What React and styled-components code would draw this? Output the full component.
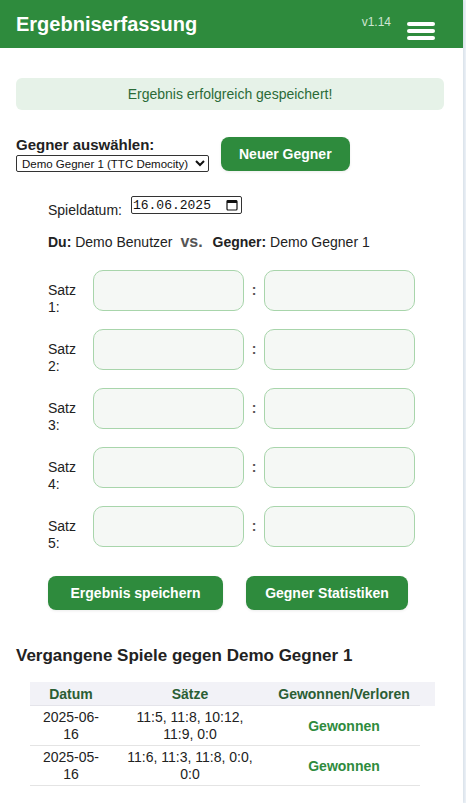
import React from "react";
import styled, { createGlobalStyle } from "styled-components";

const GlobalStyle = createGlobalStyle`
  html, body {
    margin: 0;
    padding: 0;
    background: #eef3f8;
    font-family: "Liberation Sans", Arial, sans-serif;
    color: #222;
  }
`;

const sets = [1, 2, 3, 4, 5];

const games = [
  { date: "2025-06-16", sets: "11:5, 11:8, 10:12, 11:9, 0:0", result: "Gewonnen" },
  { date: "2025-05-16", sets: "11:6, 11:3, 11:8, 0:0, 0:0", result: "Gewonnen" },
];

const App = () => {
  return (
    <>
      <GlobalStyle />
      <Page>
        <Header>
          <Title>Ergebniserfassung</Title>
          <HeaderRight>
            <Version>v1.14</Version>
            <Burger>
              <span />
              <span />
              <span />
            </Burger>
          </HeaderRight>
        </Header>
        <Content>
          <Success>Ergebnis erfolgreich gespeichert!</Success>

          <OpponentRow>
            <OpponentPick>
              <PickLabel>Gegner auswählen:</PickLabel>
              <Select defaultValue="1">
                <option value="1">Demo Gegner 1 (TTC Democity)</option>
              </Select>
            </OpponentPick>
            <GreenButton>Neuer Gegner</GreenButton>
          </OpponentRow>

          <Form>
            <DateRow>
              <span>Spieldatum:</span>
              <DateBox>
                16.06.2025
                <svg width="12" height="12" viewBox="0 0 12 12">
                  <rect x="1" y="1.5" width="10" height="9.5" rx="1" fill="none" stroke="#111" strokeWidth="1.2" />
                  <rect x="1" y="1.5" width="10" height="2.5" fill="#111" />
                </svg>
              </DateBox>
            </DateRow>

            <Players>
              <b>Du:</b> Demo Benutzer <Vs>vs.</Vs> <b>Gegner:</b> Demo Gegner 1
            </Players>

            <Sets>
              {sets.map((n) => (
                <SetRow key={n}>
                  <SetLabel>Satz {n}:</SetLabel>
                  <ScoreInput />
                  <Colon>:</Colon>
                  <ScoreInput />
                </SetRow>
              ))}
            </Sets>

            <Actions>
              <GreenButton $width="175px">Ergebnis speichern</GreenButton>
              <GreenButton $width="162px">Gegner Statistiken</GreenButton>
            </Actions>
          </Form>

          <HistoryTitle>Vergangene Spiele gegen Demo Gegner 1</HistoryTitle>
          <Table>
            <thead>
              <tr>
                <Th>Datum</Th>
                <Th>Sätze</Th>
                <Th>Gewonnen/Verloren</Th>
              </tr>
            </thead>
            <tbody>
              {games.map((g) => (
                <tr key={g.date}>
                  <Td $w="66px">{g.date}</Td>
                  <Td $w="140px">{g.sets}</Td>
                  <Td><Win>{g.result}</Win></Td>
                </tr>
              ))}
            </tbody>
          </Table>
        </Content>
      </Page>
    </>
  );
};

const Page = styled.div`
  width: 463px;
  min-height: 803px;
  background: #fff;
  box-shadow: 1px 0 3px rgba(60, 90, 130, 0.15);
`;

const Header = styled.header`
  height: 48px;
  background: #2e8b3d;
  display: flex;
  align-items: center;
  justify-content: space-between;
  padding: 0 28px 0 16px;
  box-sizing: border-box;
`;

const Title = styled.h1`
  margin: 0;
  color: #fff;
  font-size: 20px;
  font-weight: bold;
`;

const HeaderRight = styled.div`
  display: flex;
  align-items: center;
  gap: 16px;
`;

const Version = styled.span`
  color: #cfe6d2;
  font-size: 12px;
  margin-top: -4px;
`;

const Burger = styled.div`
  display: flex;
  flex-direction: column;
  gap: 3px;
  margin-top: 13px;
  span {
    display: block;
    width: 28px;
    height: 4px;
    border-radius: 2px;
    background: #fff;
  }
`;

const Content = styled.main`
  padding: 30px 16px 0;
`;

const Success = styled.div`
  background: #e6f2e8;
  color: #2b6b37;
  border-radius: 6px;
  font-size: 14px;
  text-align: center;
  height: 32px;
  line-height: 32px;
  margin-right: 3px;
`;

const OpponentRow = styled.div`
  display: flex;
  align-items: center;
  gap: 12px;
  margin-top: 26px;
`;

const OpponentPick = styled.div`
  display: flex;
  flex-direction: column;
  gap: 2px;
`;

const PickLabel = styled.label`
  font-size: 15px;
  font-weight: bold;
  color: #222;
`;

const Select = styled.select`
  font-family: "Liberation Sans", Arial, sans-serif;
  font-size: 11.5px;
  width: 193px;
  height: 17px;
  padding: 0 0 0 1px;
  border: 1px solid #333;
  border-radius: 2px;
  background: #fff;
  color: #111;
`;

const GreenButton = styled.button`
  background: #2e8b3d;
  color: #fff;
  border: none;
  border-radius: 8px;
  font-family: "Liberation Sans", Arial, sans-serif;
  font-size: 14px;
  font-weight: bold;
  height: 34px;
  width: ${(p) => p.$width || "auto"};
  padding: 0 18px;
  box-shadow: 0 1px 3px rgba(0, 0, 0, 0.08);
`;

const Form = styled.div`
  padding: 0 32px;
  margin-top: 24px;
  font-size: 14px;
`;

const DateRow = styled.div`
  display: flex;
  align-items: flex-start;
  gap: 9px;
  span {
    margin-top: 6px;
  }
`;

const DateBox = styled.div`
  width: 111px;
  height: 18px;
  box-sizing: border-box;
  border: 1px solid #333;
  border-radius: 2px;
  display: flex;
  align-items: center;
  justify-content: space-between;
  padding: 0 3px 0 1px;
  font-family: "Liberation Mono", "DejaVu Sans Mono", monospace;
  font-size: 13px;
  color: #111;
`;

const Players = styled.div`
  margin-top: 15px;
  font-size: 14px;
  color: #222;
`;

const Vs = styled.span`
  font-weight: bold;
  color: #555;
  font-size: 16px;
  margin: 0 6px 0 4px;
`;

const Sets = styled.div`
  display: flex;
  flex-direction: column;
  gap: 18px;
  margin-top: 19px;
`;

const SetRow = styled.div`
  display: flex;
  align-items: flex-start;
  height: 41px;
`;

const SetLabel = styled.span`
  width: 36px;
  margin-right: 10px;
  font-size: 14px;
  line-height: 17px;
  margin-top: 12px;
`;

const ScoreInput = styled.input`
  width: 151px;
  height: 41px;
  box-sizing: border-box;
  border: 1px solid #a8d5ab;
  border-radius: 10px;
  background: #f5f8f5;
  outline: none;
`;

const Colon = styled.span`
  width: 20px;
  text-align: center;
  font-weight: bold;
  color: #555;
  font-size: 14px;
  line-height: 41px;
`;

const Actions = styled.div`
  display: flex;
  gap: 23px;
  margin-top: 29px;
`;

const HistoryTitle = styled.h2`
  font-size: 17px;
  font-weight: bold;
  color: #222;
  margin: 36px 0 16px;
`;

const Table = styled.table`
  margin-left: 14px;
  width: 390px;
  border-collapse: collapse;
  font-size: 14px;
`;

const Th = styled.th`
  background: #f2f2f7;
  color: #2b5e34;
  font-weight: bold;
  height: 23px;
  padding: 0 8px;
  border-bottom: 1px solid #e4e4ea;
  white-space: nowrap;
  &:last-child {
    box-shadow: 15px 0 0 #f2f2f7;
  }
`;

const Td = styled.td`
  width: ${(p) => p.$w || "auto"};
  text-align: center;
  padding: 3px 8px 2px;
  line-height: 17px;
  border-bottom: 1px solid #e4e4e4;
  color: #222;
`;

const Win = styled.span`
  color: #2e8b3d;
  font-weight: bold;
`;

export default App;
